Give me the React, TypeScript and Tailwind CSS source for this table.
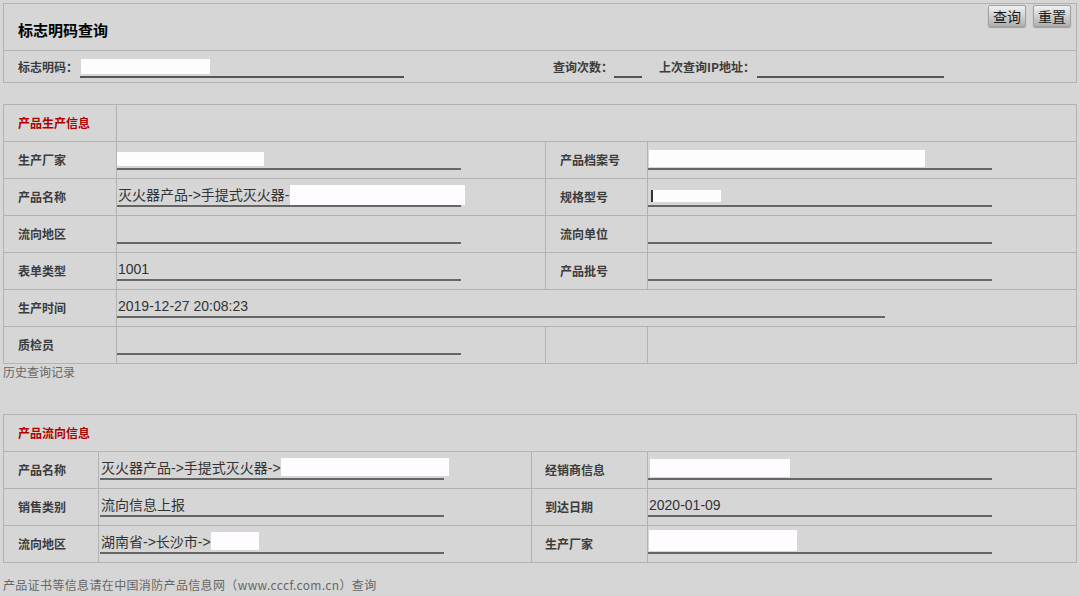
const cjk = "font-['Noto_Sans_CJK_SC',sans-serif]";
const val = "font-['Liberation_Sans','Noto_Sans_CJK_SC',sans-serif]";

function Label({ className = "", children }: { className?: string; children?: React.ReactNode }) {
  return (
    <div className={`flex items-center border-r border-[#b3b3b3] text-[12px] font-bold text-[#3c3c3c] ${cjk} ${className}`}>
      {children}
    </div>
  );
}

function Field({ className = "w-[344px]", children }: { className?: string; children?: React.ReactNode }) {
  return (
    <div className={`relative mt-[6px] h-[22px] border-b-2 border-[#666] pl-[1px] text-[14px] leading-[20px] text-[#333] whitespace-nowrap ${val} ${className}`}>
      {children}
    </div>
  );
}

function Blank({ className }: { className: string }) {
  return <span className={`absolute bg-[#fefcff] ${className}`} />;
}

function Row({ children }: { children: React.ReactNode }) {
  return <div className="flex h-[37px] border-t border-[#b3b3b3]">{children}</div>;
}

function Btn({ children }: { children: React.ReactNode }) {
  return (
    <button className={`h-[22px] w-[38px] rounded-[2px] border border-[#a0a0a0] bg-gradient-to-b from-[#f2f2f2] to-[#b0b0b0] text-[14px] leading-[20px] text-[#1a1a1a] shadow-[0_1px_1px_rgba(0,0,0,0.25)] ${cjk}`}>
      {children}
    </button>
  );
}

export default function App() {
  return (
    <div className="min-h-[596px] w-[1080px] bg-[#d6d6d6] pt-[3px] px-[3px]">
      {/* 查询框 */}
      <div className="border border-[#b3b3b3]">
        <div className="flex h-[46px] justify-between">
          <h1 className={`mt-[16px] pl-[14px] text-[15px] font-bold leading-[20px] text-black ${cjk}`}>标志明码查询</h1>
          <div className="flex gap-[7px] pr-[5px] pt-[1px]">
            <Btn>查询</Btn>
            <Btn>重置</Btn>
          </div>
        </div>
        <div className={`flex h-[32px] items-center border-t border-[#b3b3b3] pl-[14px] text-[12px] font-bold text-[#3c3c3c] ${cjk}`}>
          <span>标志明码：</span>
          <div className="relative ml-[2px] mt-[2px] h-[20px] w-[324px] border-b-2 border-[#555]">
            <Blank className="left-[1px] top-[1px] h-[15px] w-[129px]" />
          </div>
          <span className="ml-[149px]">查询次数：</span>
          <div className="ml-[1px] mt-[2px] h-[20px] w-[28px] border-b-2 border-[#555]" />
          <span className="ml-[17px]">上次查询IP地址：</span>
          <div className="ml-[2px] mt-[2px] h-[20px] w-[187px] border-b-2 border-[#555]" />
        </div>
      </div>

      {/* 产品生产信息 */}
      <div className="mt-[21px] border border-[#b3b3b3]">
        <div className="flex h-[36px]">
          <Label className="w-[113px] pl-[14px] !text-[#b00000]">产品生产信息</Label>
        </div>
        <Row>
          <Label className="w-[113px] pl-[14px]">生产厂家</Label>
          <div className="w-[429px] border-r border-[#b3b3b3]">
            <Field>
              <Blank className="left-0 top-[4px] h-[14px] w-[147px]" />
            </Field>
          </div>
          <Label className="w-[102px] pl-[14px]">产品档案号</Label>
          <div className="flex-1">
            <Field>
              <Blank className="left-[1px] top-[2px] h-[17px] w-[276px]" />
            </Field>
          </div>
        </Row>
        <Row>
          <Label className="w-[113px] pl-[14px]">产品名称</Label>
          <div className="w-[429px] border-r border-[#b3b3b3]">
            <Field>
              灭火器产品-&gt;手提式灭火器-
              <span className="inline-block h-[20px] w-[175px] align-top bg-[#fefcff]" />
            </Field>
          </div>
          <Label className="w-[102px] pl-[14px]">规格型号</Label>
          <div className="flex-1">
            <Field>
              <span className="absolute left-[3px] top-[5px] h-[12px] w-[2px] bg-[#333]" />
              <Blank className="left-[5px] top-[5px] h-[12px] w-[68px]" />
            </Field>
          </div>
        </Row>
        <Row>
          <Label className="w-[113px] pl-[14px]">流向地区</Label>
          <div className="w-[429px] border-r border-[#b3b3b3]">
            <Field />
          </div>
          <Label className="w-[102px] pl-[14px]">流向单位</Label>
          <div className="flex-1">
            <Field />
          </div>
        </Row>
        <Row>
          <Label className="w-[113px] pl-[14px]">表单类型</Label>
          <div className="w-[429px] border-r border-[#b3b3b3]">
            <Field>1001</Field>
          </div>
          <Label className="w-[102px] pl-[14px]">产品批号</Label>
          <div className="flex-1">
            <Field />
          </div>
        </Row>
        <Row>
          <Label className="w-[113px] pl-[14px]">生产时间</Label>
          <div className="flex-1">
            <Field className="w-[768px]">2019-12-27 20:08:23</Field>
          </div>
        </Row>
        <Row>
          <Label className="w-[113px] pl-[14px]">质检员</Label>
          <div className="w-[429px] border-r border-[#b3b3b3]">
            <Field />
          </div>
          <Label className="w-[102px] pl-[14px]" />
          <div className="flex-1" />
        </Row>
      </div>
      <div className={`text-[12px] leading-[16px] text-[#666] ${cjk}`}>历史查询记录</div>

      {/* 产品流向信息 */}
      <div className="mt-[34px] border border-[#b3b3b3]">
        <div className="flex h-[36px]">
          <Label className="border-r-0 pl-[14px] !text-[#b00000]">产品流向信息</Label>
        </div>
        <Row>
          <Label className="w-[95px] pl-[14px]">产品名称</Label>
          <div className="w-[433px] border-r border-[#b3b3b3] pl-[1px]">
            <Field>
              灭火器产品-&gt;手提式灭火器-&gt;
              <span className="inline-block h-[18px] w-[168px] align-top bg-[#fefcff]" />
            </Field>
          </div>
          <Label className="w-[116px] pl-[13px]">经销商信息</Label>
          <div className="flex-1">
            <Field>
              <Blank className="left-[2px] top-[1px] h-[18px] w-[140px]" />
            </Field>
          </div>
        </Row>
        <Row>
          <Label className="w-[95px] pl-[14px]">销售类别</Label>
          <div className="w-[433px] border-r border-[#b3b3b3] pl-[1px]">
            <Field>流向信息上报</Field>
          </div>
          <Label className="w-[116px] pl-[13px]">到达日期</Label>
          <div className="flex-1">
            <Field>2020-01-09</Field>
          </div>
        </Row>
        <Row>
          <Label className="w-[95px] pl-[14px]">流向地区</Label>
          <div className="w-[433px] border-r border-[#b3b3b3] pl-[1px]">
            <Field>
              湖南省-&gt;长沙市-&gt;
              <span className="inline-block h-[18px] w-[48px] align-top bg-[#fefcff]" />
            </Field>
          </div>
          <Label className="w-[116px] pl-[13px]">生产厂家</Label>
          <div className="flex-1">
            <Field>
              <Blank className="left-[1px] top-[-2px] h-[21px] w-[148px]" />
            </Field>
          </div>
        </Row>
      </div>
      <div className={`mt-[14px] text-[12px] leading-[16px] tracking-[0.35px] text-[#666] ${cjk}`}>
        产品证书等信息请在中国消防产品信息网（www.cccf.com.cn）查询
      </div>
    </div>
  );
}
